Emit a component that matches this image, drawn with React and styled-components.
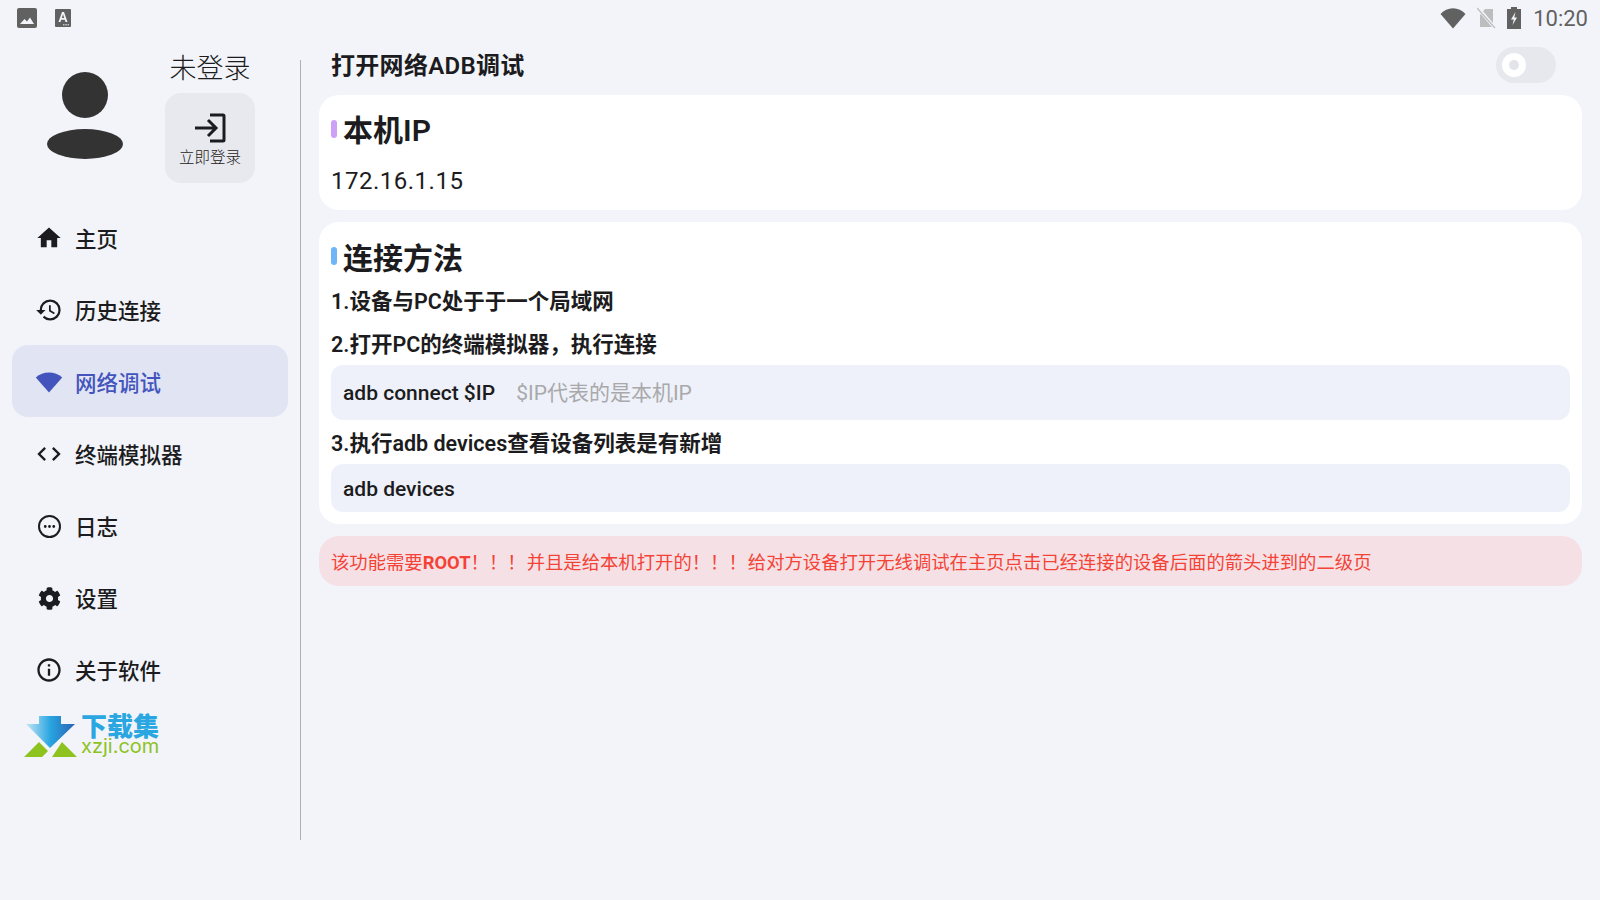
import React from "react";
import styled, { createGlobalStyle } from "styled-components";
import { MdHome, MdHistory, MdCode, MdInfoOutline, MdMoreHoriz } from "react-icons/md";
import { FaCog } from "react-icons/fa";

const colors = {
  bg: "#f2f4fa",
  text: "#1c1c20",
  active: "#4355bd",
  activeBg: "#e0e4f3",
  status: "#616161",
};

const GlobalStyle = createGlobalStyle`
  html, body {
    margin: 0;
    padding: 0;
    background: ${colors.bg};
  }
  * {
    box-sizing: border-box;
  }
`;

const Screen = styled.div`
  width: 1600px;
  height: 900px;
  overflow: hidden;
  display: flex;
  flex-direction: column;
  background: ${colors.bg};
  color: ${colors.text};
  font-family: Roboto, "Noto Sans CJK SC", sans-serif;
`;

const StatusBar = styled.div`
  height: 36px;
  flex: none;
  display: flex;
  align-items: center;
  padding: 0 12px 0 17px;
  color: ${colors.status};
`;

const StatusGroup = styled.div`
  display: flex;
  align-items: center;
  gap: ${({ $gap }) => $gap}px;
`;

const Spacer = styled.div`
  flex: 1;
`;

const Clock = styled.span`
  font-size: 22px;
  margin-left: 1px;
`;

const Body = styled.div`
  flex: 1;
  display: flex;
  min-height: 0;
`;

const Sidebar = styled.aside`
  width: 301px;
  flex: none;
  height: 780px;
  border-right: 1px solid #aeb0b7;
  margin-top: 24px;
  display: flex;
  flex-direction: column;
`;

const Profile = styled.div`
  height: 141px;
  margin-top: -24px;
  padding: 14px 0 0 46px;
  display: flex;
  gap: 41px;
`;

const Avatar = styled.svg`
  width: 78px;
  height: 88px;
  margin-top: 22px;
  flex: none;
`;

const Account = styled.div`
  width: 90px;
  display: flex;
  flex-direction: column;
  align-items: center;
`;

const AccountName = styled.div`
  font-size: 27px;
  font-weight: 300;
  line-height: 36px;
  white-space: nowrap;
  margin: 1px 0 6px;
`;

const LoginButton = styled.button`
  width: 90px;
  height: 90px;
  flex: none;
  border: 0;
  border-radius: 16px;
  background: #e8e9ef;
  color: ${colors.text};
  font: inherit;
  font-size: 15.5px;
  font-weight: 300;
  padding: 20px 0 0;
  display: flex;
  flex-direction: column;
  align-items: center;
  gap: 2px;
`;

const NavList = styled.nav`
  margin-top: 24px;
  display: flex;
  flex-direction: column;
`;

const NavItem = styled.div`
  height: 72px;
  margin: 0 12px;
  padding: 5px 0 0 25px;
  border-radius: 16px;
  display: flex;
  align-items: center;
  gap: 14px;
  font-size: 21.5px;
  font-weight: 500;
  line-height: 28px;
  background: ${({ $active }) => ($active ? colors.activeBg : "transparent")};
  color: ${({ $active }) => ($active ? colors.active : colors.text)};
`;

const NavIcon = styled.span`
  width: 24px;
  height: 24px;
  margin-top: -3px;
  display: flex;
  align-items: center;
  justify-content: center;
  font-size: ${({ $size }) => $size || 28}px;
  flex: none;
  & > svg {
    flex: none;
  }
`;

const LogIcon = styled.span`
  width: 23px;
  height: 23px;
  flex: none;
  border: 2px solid currentColor;
  border-radius: 50%;
  display: flex;
  align-items: center;
  justify-content: center;
  font-size: 17px;
`;

const Logo = styled.div`
  margin: 9px 0 0 24px;
  display: flex;
  gap: 3px;
`;

const LogoText = styled.div`
  padding-top: 2px;
  display: flex;
  flex-direction: column;
  align-items: flex-start;
`;

const LogoName = styled.span`
  font-size: 26px;
  line-height: 22px;
  font-weight: 900;
  color: #2aa7e0;
`;

const LogoDomain = styled.span`
  font-family: Inter, sans-serif;
  font-size: 20px;
  line-height: 17px;
  font-weight: 400;
  color: #8dc21f;
`;

const Main = styled.main`
  flex: 1;
  min-width: 0;
  padding: 0 18px;
  display: flex;
  flex-direction: column;
  gap: 12px;
`;

const Header = styled.div`
  height: 59px;
  padding: 0 26px 0 12px;
  display: flex;
  align-items: center;
  justify-content: space-between;
  margin-bottom: -12px;
`;

const PageTitle = styled.h1`
  margin: -4px 0 0;
  font-size: 24px;
  font-weight: 600;
  letter-spacing: 0.3px;
`;

const Toggle = styled.div`
  width: 60px;
  height: 36px;
  margin-top: -1px;
  border-radius: 18px;
  background: #e7e8ee;
  display: flex;
  align-items: center;
  padding-left: 6px;
`;

const ToggleKnob = styled.div`
  width: 24px;
  height: 24px;
  border-radius: 50%;
  background: #fff;
  display: flex;
  align-items: center;
  justify-content: center;
  &::after {
    content: "";
    width: 10px;
    height: 10px;
    border-radius: 50%;
    background: #e3e4ea;
  }
`;

const Card = styled.section`
  background: #fff;
  border-radius: 20px;
  padding: 12px;
  display: flex;
  flex-direction: column;
`;

const CardTitle = styled.h2`
  margin: 0;
  height: 46px;
  font-size: 30px;
  font-weight: 600;
  line-height: 46px;
  display: flex;
  align-items: center;
  gap: 6px;
  span {
    padding-top: ${({ $nudge }) => $nudge}px;
  }
  &::before {
    content: "";
    width: 6px;
    height: 18px;
    border-radius: 3px;
    margin-top: -3px;
    background: ${({ $accent }) => $accent};
  }
`;

const IpText = styled.div`
  font-size: 24px;
  line-height: 30px;
  margin-top: 13px;
  letter-spacing: 0.5px;
  padding-bottom: 2px;
`;

const Step = styled.div`
  font-size: 21.5px;
  font-weight: 600;
  line-height: 30px;
  padding: ${({ $pad }) => $pad};
`;

const CodeBlock = styled.div`
  height: ${({ $height }) => $height}px;
  background: #eef1f9;
  border-radius: 12px;
  padding: 1px 12px 0;
  display: flex;
  align-items: center;
  gap: 21px;
  font-size: 21px;
  font-weight: 500;
`;

const CodeHint = styled.span`
  color: #a9a9ab;
  font-size: 21px;
  font-weight: 400;
  margin-bottom: 4px;
`;

const Alert = styled.div`
  height: 50px;
  border-radius: 20px;
  background: #f5e1e5;
  color: #f44336;
  padding: 0 12px;
  display: flex;
  align-items: center;
  font-size: 18.35px;
  font-weight: 400;
  word-spacing: -3.5px;
  strong {
    font-weight: 700;
  }
`;

const navItems = [
  { label: "主页", icon: <MdHome /> },
  { label: "历史连接", icon: <MdHistory /> },
  {
    label: "网络调试",
    active: true,
    icon: (
      <svg width="28" height="24" viewBox="0 0 28 24" fill="currentColor">
        <path d="M14 22.500.8 7.500C4.600 4.200 9 2.600 14 2.600s9.400 1.600 13.200 4.900z" />
      </svg>
    ),
  },
  { label: "终端模拟器", icon: <MdCode /> },
  {
    label: "日志",
    icon: (
      <LogIcon>
        <MdMoreHoriz />
      </LogIcon>
    ),
  },
  { label: "设置", icon: <FaCog />, size: 23 },
  { label: "关于软件", icon: <MdInfoOutline /> },
];

const App = () => (
  <Screen>
    <GlobalStyle />
    <StatusBar>
      <StatusGroup $gap={18}>
        <svg width="20" height="20" viewBox="0 0 20 20">
          <rect width="20" height="20" rx="2" fill="currentColor" />
          <path d="M3 16l4.500-5 2.500 2.500 3-4 4 6.500z" fill="#f2f4fa" />
        </svg>
        <svg width="16" height="18" viewBox="0 0 16 18">
          <rect width="16" height="18" rx="1" fill="currentColor" />
          <path d="M3.500 13 7 3h2l3.500 10h-2l-.7-2.200H6.200L5.500 13zM6.800 9h2.400L8 5.200z" fill="#f2f4fa" />
          <path d="M8 15.800h6" stroke="#f2f4fa" strokeDasharray="1.500 .8" />
        </svg>
      </StatusGroup>
      <Spacer />
      <StatusGroup $gap={11}>
        <svg width="26" height="22" viewBox="0 0 26 22" fill="currentColor">
          <path d="M13 21.500.5 7C4 3.500 8.200 1.300 13 1.300S22 3.500 25.500 7z" />
        </svg>
        <svg width="19" height="22" viewBox="0 0 19 22">
          <path d="M3 8l5-6h8v18H3z" fill="#bdbdbd" />
          <path d="M1 1l17 20" stroke="#f2f4fa" strokeWidth="3.500" />
          <path d="M0 1l18 20" stroke="#bdbdbd" strokeWidth="1.200" />
        </svg>
        <svg width="14" height="22" viewBox="0 0 14 22">
          <path d="M4 0h6v2h4v20H0V2h4z" fill="currentColor" />
          <path d="M8.500 5 4 12.500h2.800L5.500 18 10 10.500H7.300z" fill="#f2f4fa" />
        </svg>
        <Clock>10:20</Clock>
      </StatusGroup>
    </StatusBar>
    <Body>
      <Sidebar>
        <Profile>
          <Avatar viewBox="0 0 78 88" fill="#333">
            <circle cx="39" cy="23" r="23" />
            <ellipse cx="39" cy="72" rx="38" ry="15" />
          </Avatar>
          <Account>
            <AccountName>未登录</AccountName>
            <LoginButton>
              <svg width="32" height="30" viewBox="0 0 32 30" fill="none" stroke="currentColor" strokeWidth="3">
                <path d="M16 2h13a1 1 0 0 1 1 1v24a1 1 0 0 1-1 1H16" />
                <path d="M1 15h21M14 7l8 8-8 8" />
              </svg>
              立即登录
            </LoginButton>
          </Account>
        </Profile>
        <NavList>
          {navItems.map((item) => (
            <NavItem key={item.label} $active={item.active}>
              <NavIcon $size={item.size}>{item.icon}</NavIcon>
              {item.label}
            </NavItem>
          ))}
        </NavList>
        <Logo>
          <svg width="54" height="44" viewBox="0 0 54 44">
            <defs>
              <linearGradient id="arrow" x1="0" x2="1" y1="0" y2="0">
                <stop offset="0" stopColor="#c5e6f6" />
                <stop offset="0.5" stopColor="#28a5e0" />
                <stop offset="1" stopColor="#2a62b4" />
              </linearGradient>
            </defs>
            <path d="M15 2h22v8h14L26 34 2 10h13z" fill="url(#arrow)" />
            <path d="M0 43 15 28l9 9-6 6zM28 43l10-15 15 15z" fill="#8dc21f" />
          </svg>
          <LogoText>
            <LogoName>下载集</LogoName>
            <LogoDomain>xzji.com</LogoDomain>
          </LogoText>
        </Logo>
      </Sidebar>
      <Main>
        <Header>
          <PageTitle>打开网络ADB调试</PageTitle>
          <Toggle>
            <ToggleKnob />
          </Toggle>
        </Header>
        <Card>
          <CardTitle $accent="#cda2f6" $nudge={1}><span>本机IP</span></CardTitle>
          <IpText>172.16.1.15</IpText>
        </Card>
        <Card>
          <CardTitle $accent="#6fb5f8" $nudge={3}><span>连接方法</span></CardTitle>
          <Step $pad="7px 0 13px">1.设备与PC处于于一个局域网</Step>
          <Step $pad="0 0 5px">2.打开PC的终端模拟器，执行连接</Step>
          <CodeBlock $height={55}>
            adb connect $IP
            <CodeHint>$IP代表的是本机IP</CodeHint>
          </CodeBlock>
          <Step $pad="9px 0 5px">3.执行adb devices查看设备列表是有新增</Step>
          <CodeBlock $height={48}>adb devices</CodeBlock>
        </Card>
        <Alert>
          <span>该功能需要<strong>ROOT</strong>！！！ 并且是给本机打开的！！！ 给对方设备打开无线调试在主页点击已经连接的设备后面的箭头进到的二级页</span>
        </Alert>
      </Main>
    </Body>
  </Screen>
);

export default App;
